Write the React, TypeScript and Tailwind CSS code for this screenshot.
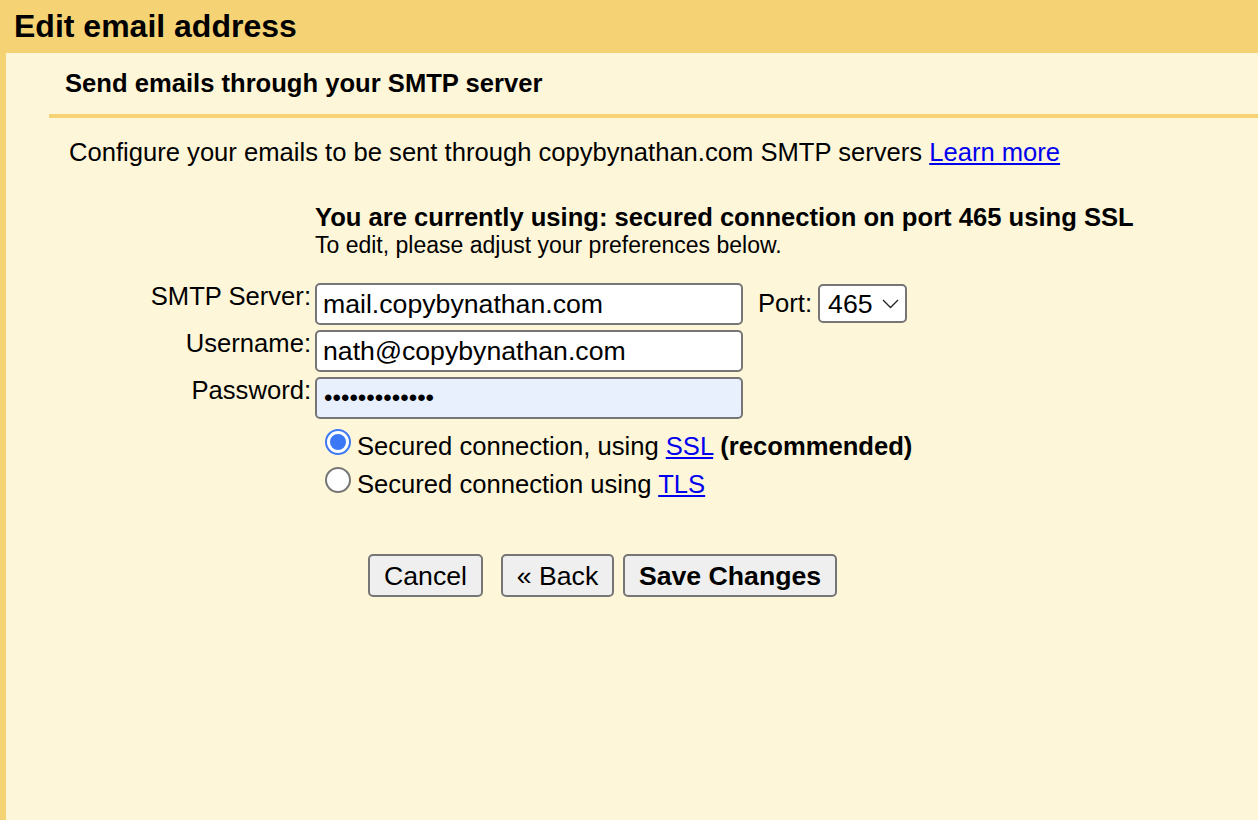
import * as React from "react";

function Field({ label, value, type = "text", filled }: { label: string; value: string; type?: string; filled?: boolean }) {
  return (
    <div className="flex h-[47px] items-start">
      <label className="w-[262px] text-right text-[25.6px] leading-[28px]">{label}</label>
      <input
        readOnly
        type={type}
        value={value}
        className={
          "ml-1 mt-[1px] h-[42px] w-[428px] rounded-[5px] border-2 border-[#767676] pr-[6px] text-black outline-none " +
          (filled ? "bg-[#e8f0fe] pl-[7px] text-[24.2px]" : "bg-white pl-[6px] text-[26.67px]")
        }
      />
    </div>
  );
}

function Radio({ checked }: { checked?: boolean }) {
  return (
    <span
      className={
        "mt-[2px] flex h-[26px] w-[26px] shrink-0 items-center justify-center rounded-full border-2 bg-white " +
        (checked ? "border-[#3b78f6]" : "border-[#767676]")
      }
    >
      {checked && <span className="h-[16px] w-[16px] rounded-full bg-[#3b78f6]" />}
    </span>
  );
}

function Btn({ children, bold, className }: { children: React.ReactNode; bold?: boolean; className?: string }) {
  return (
    <button
      className={
        "h-[43px] rounded-[5px] border-2 border-[#767676] bg-[#efefef] pt-[2px] text-[26.67px] leading-none text-black " +
        (bold ? "font-bold " : "") +
        className
      }
    >
      {children}
    </button>
  );
}

export default function App() {
  return (
    <div className="flex h-[820px] w-[1258px] flex-col overflow-hidden bg-[#f5d375] font-['Liberation_Sans',Arial,sans-serif] text-black">
      <h1 className="h-[53px] shrink-0 pl-[14px] pt-[8px] text-[32px] font-bold leading-[36px]">Edit email address</h1>
      <div className="ml-[6px] flex-1 bg-[#fef6d9] pl-[43px]">
        <div className="h-[65px] border-b-4 border-[#f5d375] pl-4 pt-[15px] text-[25.6px] font-bold leading-[30px]">
          Send emails through your SMTP server
        </div>
        <p className="pl-[20px] pt-[19px] text-[25.6px] leading-[30px]">
          Configure your emails to be sent through copybynathan.com SMTP servers{" "}
          <a className="text-[#0000ee] underline">Learn more</a>
        </p>
        <div className="pl-[266px] pt-[35px]">
          <div className="text-[25.6px] font-bold leading-[30px]">You are currently using: secured connection on port 465 using SSL</div>
          <div className="text-[23px] leading-[26px]">To edit, please adjust your preferences below.</div>
        </div>
        <div className="relative pt-[24px]">
          <Field label="SMTP Server:" value="mail.copybynathan.com" />
          <Field label="Username:" value="nath@copybynathan.com" />
          <Field label="Password:" value="•••••••••••••" type="password" filled />
          <div className="absolute left-[709px] top-[26px] flex items-center text-[25.6px]">
            <span>Port:</span>
            <div className="ml-[6px] flex h-[39px] w-[89px] items-center justify-between rounded-[5px] border-2 border-[#767676] bg-white pl-[8px] pr-[6px] text-[26.67px]">
              465
              <svg width="17" height="10" viewBox="0 0 17 10" fill="none" stroke="#222" strokeWidth="1.3">
                <path d="M1 1l7.5 7.5L16 1" />
              </svg>
            </div>
          </div>
        </div>
        <div className="ml-[276px] pt-[4px] text-[25.6px] leading-[38px]">
          <div className="flex items-start gap-[6px]">
            <Radio checked />
            <span>
              Secured connection, using <a className="text-[#0000ee] underline">SSL</a> <b>(recommended)</b>
            </span>
          </div>
          <div className="flex items-start gap-[6px]">
            <Radio />
            <span>
              Secured connection using <a className="text-[#0000ee] underline">TLS</a>
            </span>
          </div>
        </div>
        <div className="ml-[319px] flex pt-[51px]">
          <Btn className="w-[115px]">Cancel</Btn>
          <Btn className="ml-[18px] w-[113px]">« Back</Btn>
          <Btn bold className="ml-[9px] w-[214px]">Save Changes</Btn>
        </div>
      </div>
    </div>
  );
}
